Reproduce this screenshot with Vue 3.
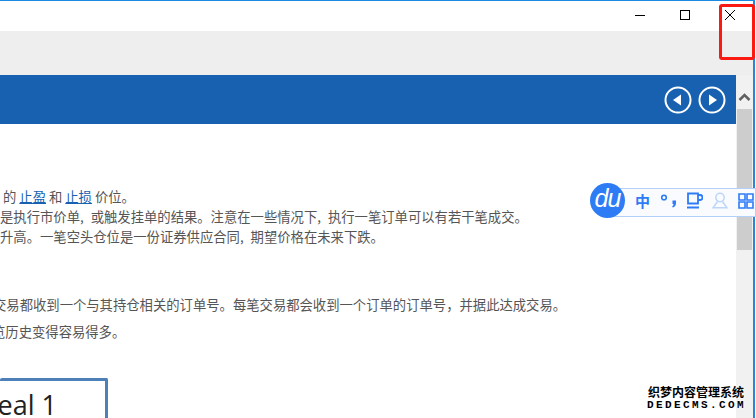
<script setup>
</script>

<template>
  <div class="window">
    <div class="titlebar">
      <svg class="win-btn" width="12" height="12" viewBox="0 0 12 12"><path d="M1 6.500h10" stroke="#000" fill="none" /></svg>
      <svg class="win-btn" width="12" height="12" viewBox="0 0 12 12"><rect x="1.500" y="1.500" width="9" height="9" stroke="#000" fill="none" /></svg>
      <svg class="win-btn" width="12" height="12" viewBox="0 0 12 12"><path d="M1 1l10 10M11 1L1 11" stroke="#000" fill="none" /></svg>
    </div>
    <div class="toolbar"></div>
    <div class="body">
      <div class="page">
        <div class="banner">
          <svg class="nav" width="28" height="28" viewBox="0 0 28 28"><circle cx="14" cy="14" r="12.500" fill="none" stroke="#fff" stroke-width="2" /><path d="M9 14l8-5.500v11z" fill="#fff" /></svg>
          <svg class="nav" width="28" height="28" viewBox="0 0 28 28"><circle cx="14" cy="14" r="12.500" fill="none" stroke="#fff" stroke-width="2" /><path d="M19 14l-8-5.500v11z" fill="#fff" /></svg>
        </div>
        <div class="article">
          <p class="line first">的 <a>止盈</a> 和 <a>止损</a> 价位。</p>
          <p class="line second">是执行市价单, 或触发挂单的结果。注意在一些情况下, 执行一笔订单可以有若干笔成交。</p>
          <p class="line third">升高。一笔空头仓位是一份证券供应合同, 期望价格在未来下跌。</p>
          <p class="line fourth">交易都收到一个与其持仓相关的订单号。每笔交易都会收到一个订单的订单号，并据此达成交易。</p>
          <p class="line fifth">览历史变得容易得多。</p>
          <div class="deal"><span>Deal 1</span></div>
        </div>
      </div>
      <div class="scrollbar">
        <svg class="arrow" width="17" height="17" viewBox="0 0 17 17"><path d="M3.500 11l5-5 5 5" fill="none" stroke="#606060" stroke-width="2.500" /></svg>
        <div class="thumb"></div>
      </div>
    </div>

    <div class="redbox"></div>

    <div class="ime">
      <div class="ime-logo">du</div>
      <span class="ime-zh">中</span>
      <svg class="ime-punct" width="17" height="14" viewBox="0 0 17 14"><circle cx="4" cy="3.500" r="2.300" fill="none" stroke="#2d7cf6" stroke-width="1.600" /><path d="M12.500 6.500h3.500v2.500c0 2-1 3.500-3 4.500l-1-.8c1-.8 1.500-1.500 1.500-2.700h-1z" fill="#2d7cf6" /></svg>
      <svg class="ime-cup" width="17" height="17" viewBox="0 0 17 17"><path d="M2 1.500h10v10H2zM12 3h2a1.500 1.500 0 0 1 0 5h-2M1 15.500h12" fill="none" stroke="#2d7cf6" stroke-width="1.800" /></svg>
      <svg class="ime-user" width="16" height="17" viewBox="0 0 16 17"><circle cx="8" cy="5.500" r="4.200" fill="none" stroke="#bcd6fb" stroke-width="1.500" /><path d="M5.500 9.500L1 15.800h14L10.500 9.500" fill="none" stroke="#bcd6fb" stroke-width="1.500" /></svg>
      <svg class="ime-grid" width="16" height="16" viewBox="0 0 16 16"><path d="M1 1h6v6H1zM9 1h6v6H9zM1 9h6v6H1zM9 9h6v6H9z" fill="none" stroke="#2d7cf6" stroke-width="1.600" /></svg>
    </div>

    <div class="mark">
      <div class="mark-cn">织梦内容管理系统</div>
      <div class="mark-en">DEDECMS.COM</div>
    </div>
  </div>
</template>

<style>
html, body { margin: 0; background: #fff; overflow: hidden; }
</style>

<style scoped>
.window {
  position: relative;
  width: 755px;
  height: 418px;
  box-sizing: border-box;
  display: flex;
  flex-direction: column;
  border-top: 1px solid #1a8ae0;
  border-right: 2px solid #2a86d8;
  background: #fff;
  font-family: "Noto Sans CJK SC", "Liberation Sans", sans-serif;
}
.titlebar {
  height: 30px;
  display: flex;
  justify-content: flex-end;
  align-items: flex-start;
  gap: 33px;
  padding: 8px 17px 0 0;
  box-sizing: border-box;
}
.win-btn { flex: none; }
.toolbar { height: 44px; background: #eeeeee; }
.body { flex: 1; display: flex; min-height: 0; }
.page { width: 736px; min-width: 0; }
.banner {
  height: 49px;
  background: #1761b0;
  display: flex;
  justify-content: flex-end;
  align-items: center;
  gap: 6px;
  padding-right: 10px;
  box-sizing: border-box;
}
.article { padding-top: 63px; overflow: hidden; height: 245px; position: relative; }
.line {
  margin: 0;
  font-size: 13.330px;
  line-height: 20px;
  color: #555;
  white-space: nowrap;
}
.line a { color: #1761b0; text-decoration: underline; }
.first { padding-left: 3px; }
.second { word-spacing: 4px; }
.third { word-spacing: 4px; }
.fourth { margin-top: 48px; margin-left: -7px; }
.fifth { margin-top: 7px; margin-left: -8px; }
.deal {
  margin-top: 36px;
  width: 108px;
  height: 60px;
  box-sizing: border-box;
  border: 3px solid #4d7fb8;
  border-left: none;
  border-radius: 2px;
  overflow: hidden;
  font-size: 27px;
  line-height: 48px;
  color: #222;
  font-family: "Open Sans", sans-serif;
  text-indent: -22px;
}
.scrollbar { width: 17px; background: #f1f1f1; display: flex; flex-direction: column; }
.arrow { flex: none; margin-top: 14px; }
.thumb { width: 15px; height: 141px; background: #cdcdcd; margin: 3px 0 0 1px; }
.redbox {
  position: absolute;
  left: 719px;
  top: 3px;
  width: 36px;
  height: 56px;
  box-sizing: border-box;
  border: 3px solid #fb1a12;
  border-radius: 3px;
}
.ime {
  position: absolute;
  left: 590px;
  top: 182px;
  width: 166px;
  height: 35px;
  display: flex;
  align-items: center;
  overflow: hidden;
}
.ime::before {
  content: "";
  position: absolute;
  left: 15px;
  right: 0;
  top: 5px;
  height: 27px;
  background: #fafbfe;
  border: 1px solid #b3d0fa;
}
.ime > * { position: relative; flex: none; }
.ime-logo {
  width: 35px;
  height: 35px;
  border-radius: 50%;
  background: #2d7cf6;
  color: #fff;
  text-align: center;
  font: italic 400 25px/31px "Liberation Sans", sans-serif;
  letter-spacing: -1px;
}
.ime-zh { margin-left: 10px; color: #2d7cf6; font-size: 15px; font-weight: 700; line-height: 20px; }
.ime-punct { margin-left: 10px; }
.ime-cup { margin-left: 9px; }
.ime-user { margin-left: 9px; }
.ime-grid { margin-left: 10px; }
.mark {
  position: absolute;
  left: 647px;
  top: 384px;
  width: 98px;
  text-align: center;
  color: #000;
  text-shadow: 0 0 2px #fff, 0 0 2px #fff, 0 0 3px #fff;
}
.mark-cn { font-size: 12px; line-height: 14px; font-weight: 700; white-space: nowrap; }
.mark-en { font: 700 11px/12px "Liberation Mono", monospace; letter-spacing: 2.400px; white-space: nowrap; }
</style>
